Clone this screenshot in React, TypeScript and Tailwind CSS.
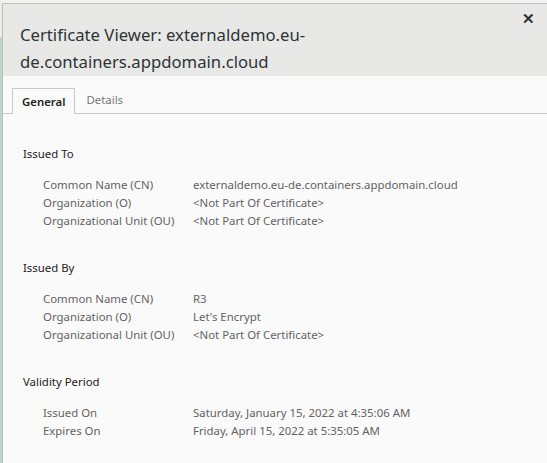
const sections = [
  {
    title: "Issued To",
    rows: [
      ["Common Name (CN)", "externaldemo.eu-de.containers.appdomain.cloud"],
      ["Organization (O)", "<Not Part Of Certificate>"],
      ["Organizational Unit (OU)", "<Not Part Of Certificate>"],
    ],
  },
  {
    title: "Issued By",
    rows: [
      ["Common Name (CN)", "R3"],
      ["Organization (O)", "Let's Encrypt"],
      ["Organizational Unit (OU)", "<Not Part Of Certificate>"],
    ],
  },
  {
    title: "Validity Period",
    rows: [
      ["Issued On", "Saturday, January 15, 2022 at 4:35:06 AM"],
      ["Expires On", "Friday, April 15, 2022 at 5:35:05 AM"],
    ],
  },
];

export default function App() {
  return (
    <div
      className="flex h-[463px] w-[547px] overflow-hidden bg-[#f2f2f2]"
      style={{ fontFamily: '"Noto Sans", "Open Sans", sans-serif' }}
    >
      {/* page peeking out behind the dialog */}
      <div className="flex w-[2px] flex-col">
        <div className="h-[37px] bg-[#ececec]" />
        <div className="flex-1 bg-[#b7d6cc]" />
      </div>

      <div className="mt-[3px] flex flex-1 flex-col border-l border-t border-[#bdbdbd] bg-[#fafafa]">
        <div className="relative h-[72px] bg-[#e8e8e7] pl-[17px] pt-[17px] text-[16.7px] leading-[27px] text-[#2e3436]">
          Certificate Viewer: externaldemo.eu-
          <br />
          de.containers.appdomain.cloud
          <button className="absolute right-[12px] top-[7px] text-[15px] font-black leading-none text-[#2e3436]">
            ✕
          </button>
        </div>

        <div className="flex h-[38px] items-end border-b border-[#c9c9c9] pl-[9px]">
          <div className="-mb-px flex h-[26px] items-center border border-b-0 border-[#c9c9c9] bg-[#fafafa] px-[9px] text-[11.4px] font-semibold text-[#222]">
            General
          </div>
          <div className="flex h-[26px] items-center px-[11px] text-[11.4px] text-[#777]">Details</div>
        </div>

        <div className="flex flex-col gap-[29px] pl-[20px] pt-[31px]">
          {sections.map((s) => (
            <div key={s.title}>
              <div className="text-[11.4px] leading-[18px] text-[#222]">{s.title}</div>
              <div className="mt-[13px] flex flex-col pl-[20px] text-[11.4px] leading-[18px] text-[#636363]">
                {s.rows.map(([k, v]) => (
                  <div key={k} className="flex">
                    <span className="w-[150px] shrink-0">{k}</span>
                    <span>{v}</span>
                  </div>
                ))}
              </div>
            </div>
          ))}
        </div>
      </div>
    </div>
  );
}
